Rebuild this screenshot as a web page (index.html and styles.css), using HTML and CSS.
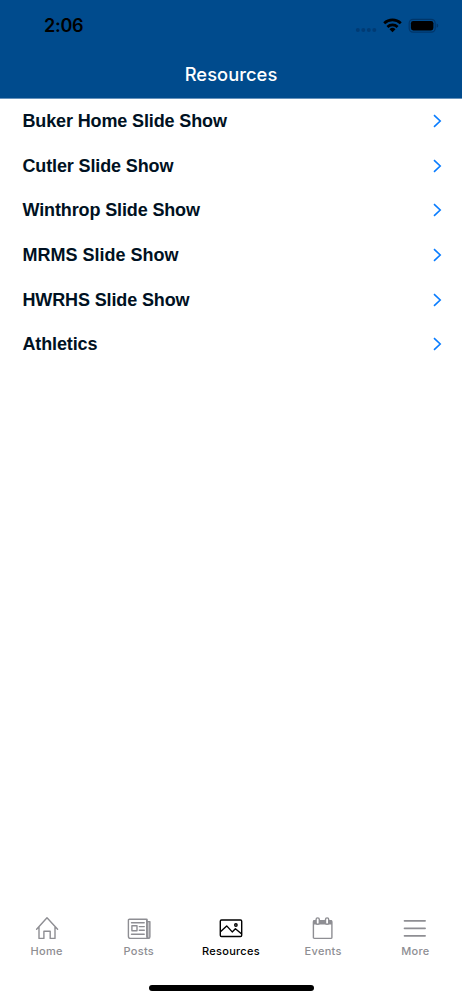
FILE: index.html
```html
<!DOCTYPE html>
<html lang="en">
<head>
<meta charset="utf-8">
<title>Resources</title>
<link rel="stylesheet" href="styles.css">
</head>
<body>
<div class="screen">
  <header class="header">
    <div class="status">
      <span class="time">2:06</span>
      <svg class="indicators" width="84" height="20" viewBox="0 0 84 20">
        <g fill="#003b74"><circle cx="2.8" cy="14" r="2"/><circle cx="8.3" cy="14" r="2"/><circle cx="13.8" cy="14" r="2"/><circle cx="19.3" cy="14" r="2"/></g>
        <g fill="none" stroke="#000" stroke-width="2.7"><path d="M29.2 7.3a12 12 0 0 1 16.6 0"/><path d="M32.4 10.9a7.4 7.4 0 0 1 10.2 0"/></g>
        <path d="M37.5 16.2l-3-3a4.3 4.3 0 0 1 6 0z"/>
        <rect x="54.2" y="3.3" width="26" height="12.8" rx="3.8" fill="none" stroke="#00366a" stroke-width="1.2"/>
        <rect x="55.9" y="5" width="22.5" height="9.4" rx="2.3"/>
        <path d="M81.6 7.6q1.7.6 1.7 2.1t-1.7 2.1z" fill="#00366a"/>
      </svg>
    </div>
    <h1 class="title">Resources</h1>
  </header>
  <main class="list">
    <a class="row"><span class="label">Buker Home Slide Show</span><svg class="chevron" width="9" height="14" viewBox="0 0 9 14"><path d="M1 1.2L7.2 7 1 12.8"/></svg></a>
    <a class="row"><span class="label">Cutler Slide Show</span><svg class="chevron" width="9" height="14" viewBox="0 0 9 14"><path d="M1 1.2L7.2 7 1 12.8"/></svg></a>
    <a class="row"><span class="label">Winthrop Slide Show</span><svg class="chevron" width="9" height="14" viewBox="0 0 9 14"><path d="M1 1.2L7.2 7 1 12.8"/></svg></a>
    <a class="row"><span class="label wide">MRMS Slide Show</span><svg class="chevron" width="9" height="14" viewBox="0 0 9 14"><path d="M1 1.2L7.2 7 1 12.8"/></svg></a>
    <a class="row"><span class="label">HWRHS Slide Show</span><svg class="chevron" width="9" height="14" viewBox="0 0 9 14"><path d="M1 1.2L7.2 7 1 12.8"/></svg></a>
    <a class="row"><span class="label">Athletics</span><svg class="chevron" width="9" height="14" viewBox="0 0 9 14"><path d="M1 1.2L7.2 7 1 12.8"/></svg></a>
  </main>
  <nav class="tabs">
    <a class="tab"><svg class="icon" viewBox="0 0 24 24"><path d="M1.6 13.2L12 1.8l10.6 11.4M4 11v11.4h4.9v-7.2h6.3v7.2H20V11"/></svg><span>Home</span></a>
    <a class="tab"><svg class="icon" viewBox="0 0 24 24"><path d="M19.9 3.2v16.2q0 3 1.7 3 1.3 0 1.3-1.6V5.6h-3" fill="#c7c7ca"/><path d="M21.6 22.4H3.6q-2.2 0-2.2-2.2V4.2q0-1 1-1h16.5q1 0 1 1v15.2q0 3 1.7 3M4.5 6.8h12.7M12.3 10.6h5M12.3 14.3h5M4.5 18.3h12.7"/><rect x="4.9" y="9.8" width="5.1" height="5"/></svg><span>Posts</span></a>
    <a class="tab active"><svg class="icon" viewBox="0 0 24 24"><rect x="1.3" y="4" width="21.4" height="16.5" rx="1.2"/><path d="M1.7 15.5l6-5.6 5.5 6 3.2-3.2 6 5"/><circle cx="16.9" cy="9" r="1.2"/></svg><span>Resources</span></a>
    <a class="tab"><svg class="icon" viewBox="0 0 24 24"><path d="M2.3 4.3H21v4.2H2.3z" fill="#8e8e93" stroke="none"/><rect x="2.4" y="4.8" width="18.5" height="17.6" rx="1"/><rect class="ring" x="5.1" y="1.9" width="3.2" height="6.4" rx="1.6"/><rect class="ring" x="14.5" y="1.9" width="3.2" height="6.4" rx="1.6"/></svg><span>Events</span></a>
    <a class="tab"><svg class="icon menu" viewBox="0 0 24 24"><path d="M1.5 4.8h20.6M1.5 12.3h20.6M1.5 19.8h20.6"/></svg><span>More</span></a>
  </nav>
  <div class="home-indicator"></div>
</div>
</body>
</html>
```
FILE: styles.css
```css
* { box-sizing: border-box; }
body { margin: 0; background: #fff; font-family: Inter, "Liberation Sans", sans-serif; }
.screen { width: 462px; height: 1000px; display: flex; flex-direction: column; background: #fff; }
.header { height: 99px; background: #004b8d; border-bottom: 1px solid #6692bb; flex: none; }
.status { height: 50px; padding: 0 22.6px 0 44px; display: flex; justify-content: space-between; align-items: center; }
.time { font-size: 18px; line-height: 22px; font-weight: 600; color: #000; letter-spacing: -0.25px; padding-top: 2px; }
.indicators { display: block; margin-top: 2px; }
.title { margin: 0; height: 48px; line-height: 48px; text-align: center; font-size: 18.3px; font-weight: 500; letter-spacing: 0.06px; color: #fff; }
.list { flex: 1; }
.row { height: 44.6px; padding: 0 20px 0 22.5px; display: flex; align-items: center; justify-content: space-between; }
.label { font: bold 18px/24px "Liberation Sans", Arial, sans-serif; letter-spacing: -0.13px; color: #001122; white-space: nowrap; }
.wide { letter-spacing: 0; }
.chevron { fill: none; stroke: #087cff; stroke-width: 1.6; }
.tabs { height: 69px; padding-left: 0.5px; display: flex; flex: none; }
.tab { width: 92.2px; display: flex; flex-direction: column; align-items: center; color: #8e8e93; font-size: 11px; line-height: 14px; font-weight: 500; letter-spacing: 0.28px; gap: 4px; }
.active { color: #000; }
.icon { width: 24px; height: 24px; fill: none; stroke: currentColor; stroke-width: 1.4; stroke-linejoin: round; stroke-linecap: round; }
.menu { stroke-width: 1.7; }
.ring { fill: #fff; }
.home-indicator { width: 165px; height: 5.5px; margin: 0 auto 9.5px; border-radius: 3px; background: #000; flex: none; }
```
